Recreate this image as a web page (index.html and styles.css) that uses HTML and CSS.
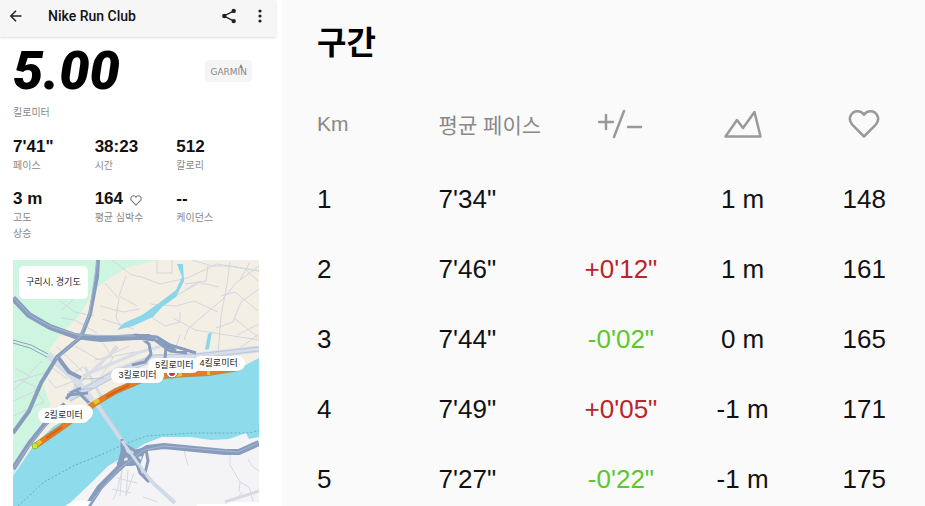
FILE: index.html
```html
<!DOCTYPE html>
<html lang="ko">
<head>
  <meta charset="UTF-8">
  <meta name="viewport" content="width=device-width, initial-scale=1">
  <title>Nike Run Club</title>
  <link rel="stylesheet" href="styles.css">
</head>
<body>
  <div class="page">
    <main class="run">
      <header class="app-bar">
        <button class="icon-btn" aria-label="뒤로">
          <svg width="16" height="16" viewBox="0 0 16 16"><path d="M13.5 8H3M8 2.8 2.8 8 8 13.2" fill="none" stroke="#222" stroke-width="1.5"/></svg>
        </button>
        <h1 class="app-title">Nike Run Club</h1>
        <button class="icon-btn" aria-label="공유">
          <svg width="16" height="16" viewBox="0 0 16 16"><path d="M13 2.8 3 8l10 5.2" fill="none" stroke="#222" stroke-width="1.4"/><circle cx="12.7" cy="2.9" r="2.2" fill="#222"/><circle cx="3.3" cy="8" r="2.2" fill="#222"/><circle cx="12.7" cy="13.1" r="2.2" fill="#222"/></svg>
        </button>
        <button class="icon-btn" aria-label="더보기">
          <svg width="16" height="16" viewBox="0 0 16 16" fill="#222"><circle cx="8" cy="3" r="1.6"/><circle cx="8" cy="8" r="1.6"/><circle cx="8" cy="13" r="1.6"/></svg>
        </button>
      </header>

      <div class="content">
        <div class="distance">
          <div class="distance-value">5.00</div>
          <div class="garmin">
            <span>GARMIN</span>
            <svg class="garmin-mark" width="4" height="4" viewBox="0 0 4 4"><path d="M2 0 4 4H0z" fill="#888"/></svg>
          </div>
        </div>
        <p class="label">킬로미터</p>

        <dl class="stats">
          <div class="stat"><dt>페이스</dt><dd>7'41"</dd></div>
          <div class="stat"><dt>시간</dt><dd>38:23</dd></div>
          <div class="stat"><dt>칼로리</dt><dd>512</dd></div>
          <div class="stat"><dt>고도<br>상승</dt><dd>3 m</dd></div>
          <div class="stat"><dt>평균 심박수</dt><dd>164
            <svg class="heart" width="12" height="11" viewBox="0 0 32 30"><path d="M16 27.5 4.2 15.6C-1 9.5 3.5 2.2 9.5 2.2c2.8 0 5 1.2 6.5 3.6 1.5-2.4 3.7-3.6 6.5-3.6 6 0 10.5 7.3 5.3 13.4z" fill="none" stroke="#777" stroke-width="3"/></svg></dd></div>
          <div class="stat"><dt>케이던스</dt><dd>--</dd></div>
        </dl>
      </div>

      <div class="map">
        <svg class="map-art" viewBox="13 260 246 246" preserveAspectRatio="xMidYMin slice">
          <rect x="13" y="260" width="246" height="246" fill="#f4efe5"/>
          <!-- hills -->
          <path d="M13 260H157L128 267 108 279 95 289 79 316 62 333 49 350 58 360 43 384 50 404 38 430 13 478z" fill="#cdf5df"/>
          <!-- small streets -->
          <g fill="none" stroke="#d3d6df" stroke-width="1">
            <path d="M112 260l18 14 9 3M105 283l14 16-3 18 5 10M126 276l-7 20 18 10M139 276l21 8 27-6 30-14 42 7M157 260v13h15v-13M192 260l20 6 19 0 28 5M230 262l-3 22-6 32-3 38M235 284l-12 15-18 15-17 15-4 11M235 284l24-18M221 296l14-4 23 19M186 290l11-8 22 5M150 304l26 2 18-5 24 11M145 313l20 13 15-4v-10M173 318l24 13M195 330l64 10M216 328l17-6 8-20 18-13M234 318l25 20M237 335l22-11M240 348l19-14M199 283l-20 11-17 11M180 335l-5 14M100 306l23 6 16-3M102 319l32 10M116 345l-20 27M75 346l24 14 30-14M95 360l40-8M60 301l15 11 19 4M73 300l-11 10M61 318l14 2 22 13M103 343l10 15-14 22M56 346l26 25"/>
            <path d="M15 368l15 8-17 14M14 382l30-9M30 373l12-12M13 401l27-12-21-10M34 388l10 14-31 14M48 379l8 9 18-7 13 13M50 366l16 12 18-12M246 270l12 11M250 262l-10 18M208 266l-2 15-21 3"/>
          </g>
          <!-- riverside expressway -->
          <g fill="none" stroke="#d8dde8">
            <path d="M48 355l26 23 18 23" stroke-width="7"/>
            <path d="M259 349l-60 7-46 2-36 13-48 28" stroke-width="7"/>
            <path d="M118 347l-39 36-12 15M83 376l54-23 28-8M85 367l18 33" stroke-width="3"/>
          </g>
          <g fill="none" stroke="#b8c5db" stroke-width="1"><path d="M259 347l-62 7-42 1-49 20-39 23M259 351l-60 7-45 3-35 14-49 26M83 379l21-1M68 392l25-4M74 384l18 20"/></g>
          <!-- streams -->
          <path d="M177 264h6l1 17-8 16-14 10-9 10-20 9-16 4 7-7 18-8 17-12 17-13 6-13z" fill="#8bd7e9"/>
          <path d="M208 334l4-2-3 17-4 1z" fill="#8bd7e9"/>
          <!-- river -->
          <path d="M13 476 34 445 54 426 94 404 120 391 144 380 172 376 210 373 242 367 259 358V506H13z" fill="#8edbec"/>
          <path d="M71 502 94 480 108 466 127 455 144 444 162 437 190 437 211 440 229 439 246 433 249 439 259 437V506H71z" fill="#f4f3f6"/>
          <g fill="none" stroke="#d5dae3" stroke-width="1">
            <path d="M184 450l4 16M230 455v10l10 17-1 10M240 482l9 5 4 14M248 459l4 7 7 5M242 492l-5 7M124 462l-7 29-4 9M117 478l20 5M122 469l-2 27M128 470l-2 26M134 473l-8 22M112 489l19 4M143 497l15 5"/>
            <path d="M259 491l-34 11" stroke-width="3"/>
          </g>
          <path d="M18 506l26-24 29-16 32-13 18-8 23-9 48-3 55 0 11-3 12-11" fill="none" stroke="#6caac0" stroke-width="1" stroke-dasharray="2 2"/>
          <!-- bridge -->
          <path d="M96 403l27 39 13 20 16 20 23 21" fill="none" stroke="#d1dbe6" stroke-width="4"/>
          <path d="M100 404l26 39 12 19" fill="none" stroke="#bfcfdf" stroke-width="1"/>
          <!-- highways -->
          <g fill="none" stroke="#889dbd" stroke-linejoin="round">
            <path d="M13 298l16 17 21 12 25 9 26 3 34-2 15 0" stroke-width="6"/>
            <path d="M98 260l-1 17-7 37-9 23-24 20-16 26-12 28-16 22" stroke-width="4"/>
            <path d="M13 469l16-25 16-20 20-20" stroke-width="5"/>
            <path d="M57 356l12 16 12 6" stroke-width="4"/>
            <path d="M134 335l23 2 13 8 26 8M135 338l20 2 15 11 17 2M140 337l9 7 2 10-6 8-13 3M157 340l9 7-1 11M160 341l16 10" stroke-width="3"/>
            <path d="M66 399l6-7 9-4M77 391l12 12M67 395l21-2" stroke-width="3"/>
            <path d="M259 443l-20 9-14 0-61-6-17 2-17 10-12 11-18 18-13 20" stroke-width="6"/>
            <path d="M122 441l3 12 11 8 4 12 9 9M124 444l11 7 11-2M118 467l4-15 0-13M136 461l10-12 2 12-4 16M117 464l24-9" stroke-width="3"/>
          </g>
          <path d="M118 466l5-13 7 2 8-4 8-2-3 8-3 8-9 1z" fill="#889dbd"/>
          <path d="M138 457l4-1-1 4zM124 459l3-2 1 3-4 1z" fill="#e6ebf1"/>
          <g fill="none" stroke="#a5b7d2" stroke-width="1"><path d="M13 297l18 19 21 11 26 8 57 1M97 261l-8 54-9 22-24 22M258 443l-20 9-74-6-20 4-26 20-29 34M13 469l18-26 26-31"/></g>
          <g fill="none" stroke="#8da1be" stroke-width="1"><path d="M13 340l18 5 17 9M13 343l17 5 17 9"/></g>
          <path d="M122 441l15 21 14 19 22 20" fill="none" stroke="#d1dbe6" stroke-width="3"/>
          <!-- recorded route -->
          <path d="M35 446 61 428 94 404 116 391 144 379 171 375 208 373 239 368" fill="none" stroke="#b98c3d" stroke-width="6" stroke-linecap="round"/>
          <path d="M35 446 61 428 94 404 116 391 144 379 171 375 208 373 239 368" fill="none" stroke="#e77c20" stroke-width="4" stroke-linecap="round"/>
          <path d="M106 397l23-12M46 438l16-11" fill="none" stroke="#df5b1a" stroke-width="2"/>
          <path d="M94 403l5-3M176 375l6-1M207 373l3 0" stroke="#e8c630" stroke-width="4"/>
          <path d="M35 446l6-5" stroke="#e9c72e" stroke-width="4"/>
          <circle cx="35" cy="446" r="3" fill="#c9e72f" stroke="#91bd35"/>
          <circle cx="172" cy="372" r="6" fill="#fff" stroke="#777"/>
          <circle cx="172" cy="373" r="3" fill="#cf3040"/>
          <!-- torn lower edge -->
          <path d="M73 501h18l-3 5H65zM197 504h31v-2h31v4h-62z" fill="#fff"/>
        </svg>
        <span class="place">구리시, 경기도</span>
        <span class="pin pin-1"></span>
        <span class="pin pin-5">5킬로미터</span>
        <span class="pin pin-4">4킬로미터</span>
        <span class="pin pin-3">3킬로미터</span>
        <span class="pin pin-2">2킬로미터</span>
      </div>
    </main>

    <section class="splits">
      <h2>구간</h2>
      <table>
        <thead>
          <tr>
            <th>Km</th>
            <th>평균 페이스</th>
            <th class="mid"><svg width="46" height="30" viewBox="0 0 46 30" role="img" aria-label="차이"><path d="M1 13h14M8 6v14M16 28 26 2M30 18h13" fill="none" stroke="#999" stroke-width="2.5" stroke-linecap="round"/></svg></th>
            <th class="mid"><svg width="40" height="30" viewBox="0 0 40 30" role="img" aria-label="고도"><path d="M2.5 27.5 14 11l6 8L31.5 3 37.5 27.5z" fill="none" stroke="#999" stroke-width="2.5" stroke-linejoin="round"/></svg></th>
            <th class="mid"><svg width="32" height="30" viewBox="0 0 32 30" role="img" aria-label="심박수"><path d="M16 27.5 4.2 15.6C-1 9.5 3.5 2.2 9.5 2.2c2.8 0 5 1.2 6.5 3.6 1.5-2.4 3.7-3.6 6.5-3.6 6 0 10.5 7.3 5.3 13.4z" fill="none" stroke="#999" stroke-width="2.5" stroke-linejoin="round"/></svg></th>
          </tr>
        </thead>
        <tbody>
          <tr><td>1</td><td>7'34"</td><td class="mid"></td><td class="mid">1 m</td><td class="mid">148</td></tr>
          <tr><td>2</td><td>7'46"</td><td class="mid slower">+0'12"</td><td class="mid">1 m</td><td class="mid">161</td></tr>
          <tr><td>3</td><td>7'44"</td><td class="mid faster">-0'02"</td><td class="mid">0 m</td><td class="mid">165</td></tr>
          <tr><td>4</td><td>7'49"</td><td class="mid slower">+0'05"</td><td class="mid">-1 m</td><td class="mid">171</td></tr>
          <tr><td>5</td><td>7'27"</td><td class="mid faster">-0'22"</td><td class="mid">-1 m</td><td class="mid">175</td></tr>
        </tbody>
      </table>
    </section>
  </div>
</body>
</html>
```
FILE: styles.css
```css
:root {
  --text-color: #111;
  --muted-color: #888;
  --bar-bg: #f6f6f6;
  --panel-bg: #fafafa;
  --slower-color: #b9252b;
  --faster-color: #5cc72f;
}

* {
  box-sizing: border-box;
}

body {
  margin: 0;
  background: #fff;
  color: var(--text-color);
  font-family: "Liberation Sans", "Noto Sans CJK KR", sans-serif;
}

h1, h2, p, dl, dd {
  margin: 0;
}

.page {
  display: grid;
  grid-template-columns: 282fr 643fr;
  grid-template-rows: minmax(0, 1fr);
  height: 100vh;
  overflow: hidden;
}

/* run summary */
.run {
  display: flex;
  flex-direction: column;
  min-width: 0;
  padding-right: 6px;
}

.app-bar {
  display: flex;
  align-items: center;
  height: 37px;
  padding: 0 8px 5px;
  background: var(--bar-bg);
  box-shadow: 0 1px 2px #ddd;
}

.icon-btn {
  display: flex;
  padding: 0;
  border: none;
  background: none;
  cursor: pointer;
}

.icon-btn + .icon-btn {
  margin-left: 15px;
}

.app-title {
  flex: 1;
  margin-left: 24px;
  font-family: Roboto, sans-serif;
  font-size: 14px;
  font-weight: 500;
  line-height: 18px;
}

.content {
  padding: 5px 18px 0 13px;
}

.distance {
  display: flex;
  justify-content: space-between;
  align-items: center;
  height: 58px;
}

.distance-value {
  color: #000;
  font-family: Roboto, sans-serif;
  font-size: 54px;
  font-style: italic;
  font-weight: 900;
  line-height: 56px;
}

.garmin {
  position: relative;
  margin-right: 6px;
  padding: 6px 5px 4px;
  border-radius: 4px;
  background: #f5f5f5;
  color: var(--muted-color);
  font-family: "DejaVu Sans", sans-serif;
  font-size: 9px;
  line-height: 12px;
}

.garmin-mark {
  position: absolute;
  top: 4px;
  right: 9px;
}

.label,
.stat dt {
  color: var(--muted-color);
  font-size: 10px;
  line-height: 16px;
}

.label {
  margin-top: 5px;
}

.stats {
  display: grid;
  grid-template-columns: repeat(3, 1fr);
  row-gap: 4px;
  margin-top: 15px;
}

.stat {
  display: flex;
  flex-direction: column-reverse;
  justify-content: flex-end;
  min-height: 48px;
}

.stat dd {
  font-size: 17px;
  font-weight: bold;
  line-height: 22px;
  color: var(--text-color);
}

.heart {
  margin-left: 2px;
  vertical-align: -2px;
}

/* route map */
.map {
  position: relative;
  flex: 1;
  min-height: 0;
  margin: 18px 17px 0 13px;
  overflow: hidden;
}

.map-art {
  display: block;
  width: 100%;
  height: 100%;
}

.place,
.pin {
  position: absolute;
  background: #fff;
  color: #222;
  font-size: 9px;
  text-align: center;
  white-space: nowrap;
}

.place {
  top: 6px;
  left: 6px;
  padding: 0 7px;
  border-radius: 5px;
  line-height: 33px;
}

.pin {
  padding: 0 7px;
  border-radius: 8px;
  line-height: 15px;
}

.pin-1 {
  top: 59%;
  left: 17%;
  width: 38px;
  height: 15px;
}

.pin-2 {
  top: 60%;
  left: 10%;
}

.pin-3 {
  top: 44%;
  left: 40%;
}

.pin-4 {
  top: 39%;
  left: 73%;
}

.pin-5 {
  top: 40%;
  left: 55%;
}

/* split table */
.splits {
  min-width: 0;
  padding: 19px 0 0 35px;
  background: var(--panel-bg);
}

.splits h2 {
  color: #000;
  font-size: 32px;
  font-weight: bold;
  line-height: 48px;
}

.splits table {
  width: 100%;
  margin-top: 17px;
  border-collapse: collapse;
  table-layout: fixed;
}

.splits th,
.splits td {
  height: 70px;
  padding: 0;
  text-align: left;
  font-size: 26px;
  font-weight: normal;
}

.splits th {
  height: 80px;
  color: var(--muted-color);
  font-size: 21px;
}

.splits th svg {
  display: block;
  margin: 0 auto;
}

.splits .mid {
  text-align: center;
}

.splits .slower {
  color: var(--slower-color);
}

.splits .faster {
  color: var(--faster-color);
}
```
